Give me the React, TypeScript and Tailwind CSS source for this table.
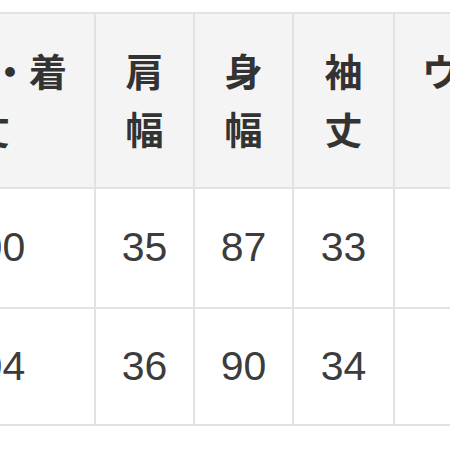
import React from 'react';

const cols = [
  { label: '総丈・着丈', width: 208 },
  { label: '肩幅', width: 99 },
  { label: '身幅', width: 99 },
  { label: '袖丈', width: 101 },
  { label: 'ウエスト', width: 208 },
];

const rows = [
  { height: 120, values: ['100', '35', '87', '33', ''] },
  { height: 117, values: ['104', '36', '90', '34', ''] },
];

export default function App() {
  return (
    <div className="w-[450px] h-[450px] overflow-hidden bg-white">
      <table className="table-fixed border-collapse w-[715px] min-w-[715px] mt-[12px] ml-[-114px]">
        <colgroup>
          {cols.map((c) => (
            <col key={c.label} style={{ width: c.width }} />
          ))}
        </colgroup>
        <thead>
          <tr className="h-[175px]">
            {cols.map((c) => (
              <th
                key={c.label}
                className="align-top border-2 border-[#e2e2e2] bg-[#f4f4f4] px-4 pt-[27px] text-center text-[38px] leading-[58px] font-bold text-[#333] [font-family:'Noto_Sans_CJK_JP',sans-serif]"
              >
                {c.label}
              </th>
            ))}
          </tr>
        </thead>
        <tbody>
          {rows.map((r, i) => (
            <tr key={i} style={{ height: r.height }}>
              {r.values.map((v, j) => (
                <td
                  key={j}
                  className="border-2 border-[#e2e2e2] text-center align-middle text-[41px] text-[#3c3c3c] [font-family:'Liberation_Sans',Arial,sans-serif]"
                >
                  {v}
                </td>
              ))}
            </tr>
          ))}
        </tbody>
      </table>
    </div>
  );
}
